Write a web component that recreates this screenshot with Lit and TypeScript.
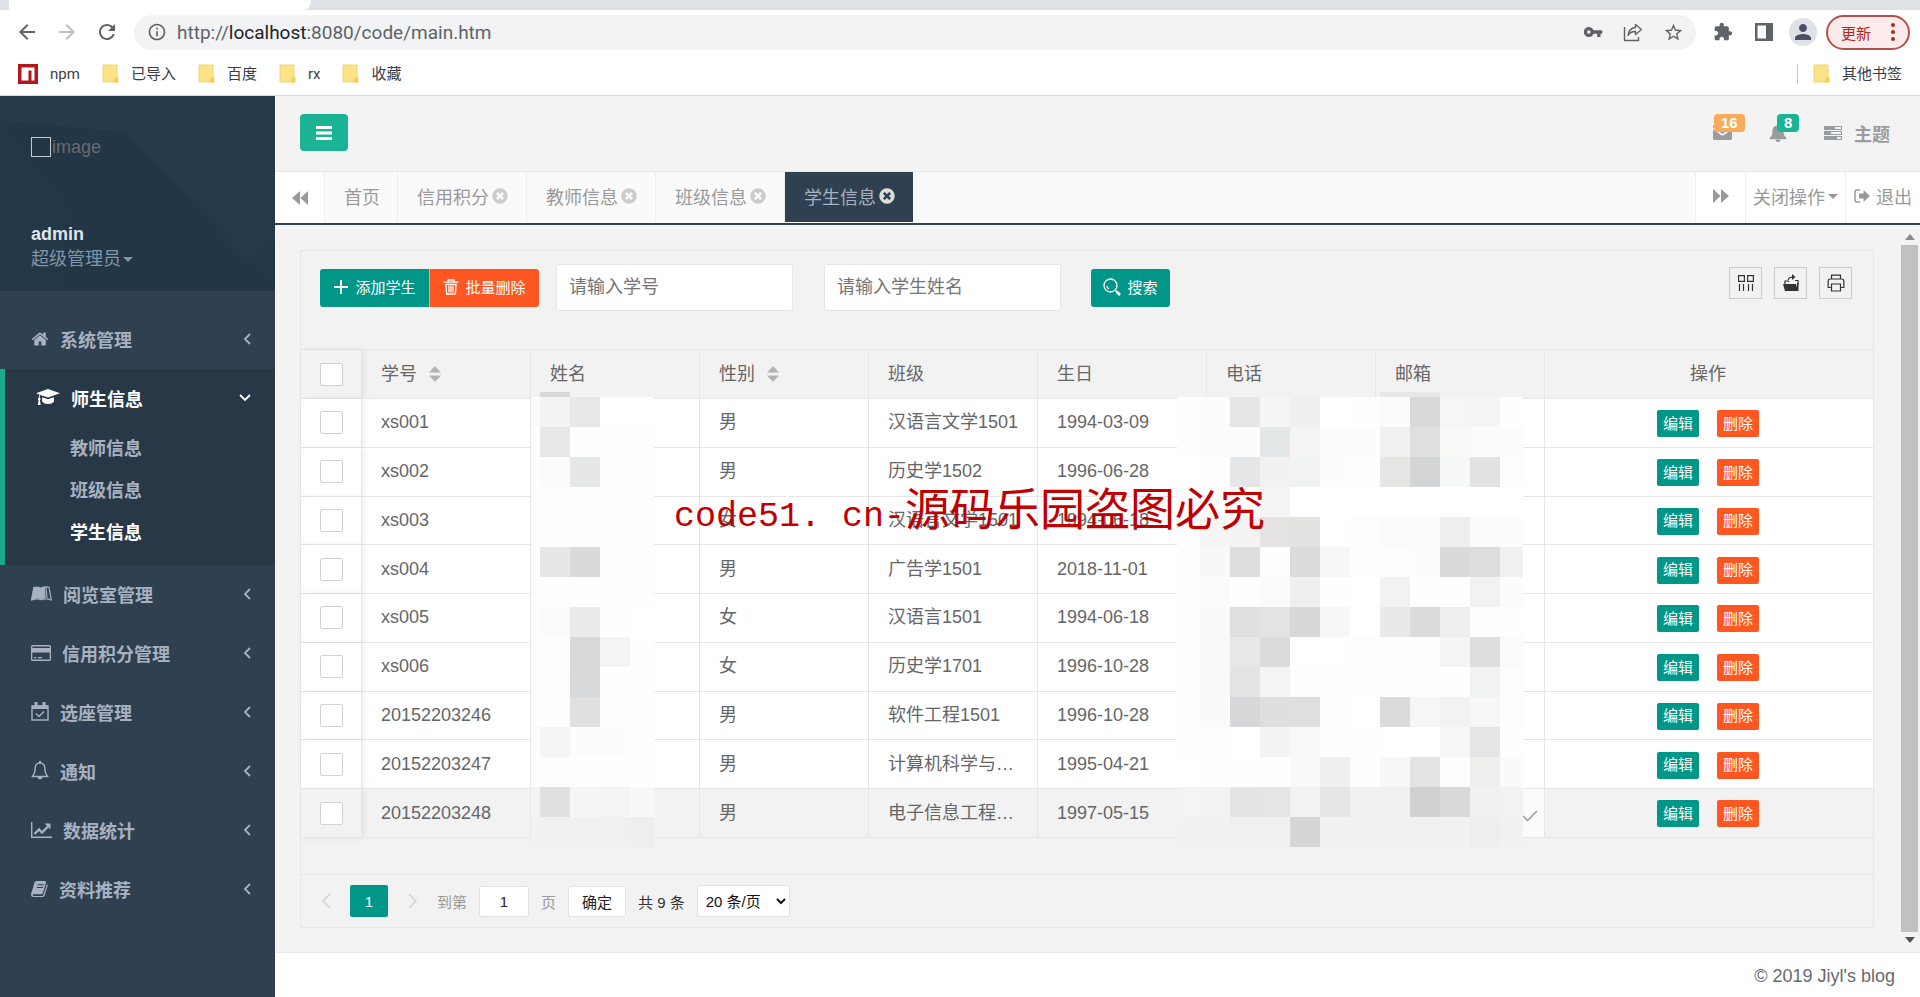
import { LitElement, html, svg, css, TemplateResult } from "lit";
import { customElement } from "lit/decorators.js";

const box = (w: number, h: number, vb: string, body: TemplateResult) =>
  html`<svg class="icon" width=${w} height=${h} viewBox=${vb} aria-hidden="true">${body}</svg>`;

const material = (size: number, d: string) =>
  box(size, size, "0 0 24 24", svg`<path fill="currentColor" d=${d}/>`);

const backArrow = () => material(24, "M20 11H7.83l5.59-5.59L12 4l-8 8 8 8 1.41-1.41L7.83 13H20v-2z");
const forwardArrow = () => material(24, "M4 11h12.17l-5.59-5.59L12 4l8 8-8 8-1.41-1.41L16.17 13H4v-2z");
const reload = () => material(24, "M17.65 6.35C16.2 4.9 14.21 4 12 4c-4.42 0-7.99 3.58-7.99 8s3.57 8 7.99 8c3.73 0 6.84-2.55 7.73-6h-2.08c-.82 2.33-3.04 4-5.65 4-3.31 0-6-2.69-6-6s2.69-6 6-6c1.66 0 3.14.69 4.22 1.78L13 11h7V4l-2.35 2.35z");
const info = () => material(20, "M11 17h2v-6h-2v6zm1-15C6.48 2 2 6.48 2 12s4.48 10 10 10 10-4.48 10-10S17.52 2 12 2zm0 18c-4.41 0-8-3.59-8-8s3.59-8 8-8 8 3.59 8 8-3.59 8-8 8zM11 9h2V7h-2v2z");
const key = () => material(20, "M12.65 10C11.83 7.67 9.61 6 7 6c-3.31 0-6 2.69-6 6s2.69 6 6 6c2.61 0 4.83-1.67 5.65-4H17v4h4v-4h2v-4H12.65zM7 14c-1.1 0-2-.9-2-2s.9-2 2-2 2 .9 2 2-.9 2-2 2z");
const share = () => box(20, 20, "0 0 20 20", svg`<g fill="none" stroke="currentColor" stroke-width="1.4" stroke-linejoin="round"><path d="M1.5 5v13.500H15.500V15"/><path d="M12.500 2.500l6 5-6 5V9.500C8.500 9.300 6.500 11 5 13.500 5.500 9 8 6 12.500 5.500z"/></g>`);
const star = () => material(21, "M22 9.24l-7.19-.62L12 2 9.190 8.630 2 9.240l5.460 4.730L5.820 21 12 17.270 18.180 21l-1.630-7.030L22 9.240zM12 15.400l-3.760 2.270 1-4.280-3.320-2.880 4.380-.38L12 6.100l1.710 4.040 4.380.38-3.320 2.880 1 4.280L12 15.400z");
const puzzle = () => material(20, "M20.5 11H19V7c0-1.1-.9-2-2-2h-4V3.500C13 2.120 11.880 1 10.500 1S8 2.120 8 3.500V5H4c-1.100 0-1.990.9-1.990 2v3.800H3.500c1.490 0 2.700 1.210 2.700 2.700s-1.210 2.700-2.700 2.700H2V20c0 1.100.9 2 2 2h3.800v-1.500c0-1.490 1.210-2.700 2.700-2.700 1.490 0 2.700 1.210 2.700 2.700V22H17c1.100 0 2-.9 2-2v-4h1.500c1.380 0 2.500-1.120 2.500-2.500S21.880 11 20.500 11z");
const sidePanel = () => box(18, 18, "0 0 18 18", svg`<path fill="currentColor" fill-rule="evenodd" d="M0 0h18v18H0zM2.500 2.500v13h8.500v-13z"/>`);
const person = () => material(24, "M12 12c2.210 0 4-1.790 4-4s-1.790-4-4-4-4 1.790-4 4 1.790 4 4 4zm0 2c-2.670 0-8 1.340-8 4v2h16v-2c0-2.660-5.330-4-8-4z");
const dots = () => box(4, 18, "0 0 4 18", svg`<g fill="currentColor"><circle cx="2" cy="2" r="2"/><circle cx="2" cy="9" r="2"/><circle cx="2" cy="16" r="2"/></g>`);
const npmLogo = () => box(20, 20, "0 0 20 20", svg`<path fill="#b3161b" d="M0 0h20v20H0z"/><path fill="#fff" d="M3.500 3.500h13v13h-3v-10h-3v10h-7z"/>`);
const folder = () => box(17, 20, "0 0 17 20", svg`<path fill="#fbe38a" stroke="#f0d470" d="M1 1h14v11l1 1v5H1z"/><path fill="#f3cf5a" d="M12 14.500q2-2 4-.5v4.500h-4z"/>`);

const bars = () => box(18, 14, "0 0 18 14", svg`<path fill="currentColor" d="M1 0h16v3H1zM1 5.500h16v3H1zM1 11h16v3H1z"/>`);
const envelope = () => box(19, 15, "0 0 19 15", svg`<path fill="currentColor" d="M0 4.500l8 5.500q1.500 1 3 0l8-5.500V13.500q0 1.500-1.500 1.500h-16Q0 15 0 13.500zM1 0h17q1 0 1 1.500 0 1-1 1.700l-7.500 5q-1 .7-2 0L1 3.200Q0 2.500 0 1.500 0 0 1 0z"/>`);
const bellSolid = () => box(18, 18, "0 0 18 18", svg`<path fill="currentColor" d="M9 0q1.300 0 1.300 1.500C13 2 14.500 4 14.500 6.500c0 4 1 6 3 7.500q0 1.200-1.300 1.200H1.800Q.5 15.200.5 14c2-1.500 3-3.500 3-7.500C3.500 4 5 2 7.700 1.500 7.700 0 9 0 9 0zM6.500 15.800h5a2.500 2.200 0 0 1-5 0z"/>`);
const tasks = () => box(18, 14, "0 0 18 14", svg`<path fill="currentColor" fill-rule="evenodd" d="M0 0h18v4H0zM11 1v2h6V1zM0 5h18v4H0zM7 6v2h10V6zM0 10h18v4H0zM13 11v2h4v-2z"/>`);
const rewind = () => box(16, 16, "0 0 16 16", svg`<path fill="currentColor" d="M8 1v14L0 8zM16 1v14L8.500 8z"/>`);
const fastForward = () => box(16, 16, "0 0 16 16", svg`<path fill="currentColor" d="M8 1v14l8-7zM0 1v14l7.500-7z"/>`);
const closeDot = () => box(18, 18, "0 0 1792 1792", svg`<path fill="currentColor" d="M1277 1122q0-26-19-45l-181-181 181-181q19-19 19-45 0-27-19-46l-90-90q-19-19-46-19-26 0-45 19l-181 181-181-181q-19-19-45-19-27 0-46 19l-90 90q-19 19-19 46 0 26 19 45l181 181-181 181q-19 19-19 45 0 27 19 46l90 90q19 19 46 19 26 0 45-19l181-181 181 181q19 19 45 19 27 0 46-19l90-90q19-19 19-46zm387-226q0 209-103 385.500t-279.500 279.500-385.500 103-385.500-103-279.500-279.500-103-385.500 103-385.500 279.500-279.500 385.500-103 385.500 103 279.500 279.500 103 385.500z"/>`);
const signOut = () => box(16, 14, "0 0 16 14", svg`<path fill="none" stroke="currentColor" stroke-width="1.500" d="M6 1H3Q1 1 1 3v8q0 2 2 2h3"/><path fill="currentColor" d="M5 4.500h4.500V1L16 7l-6.500 6V9.500H5z"/>`);
const caret = () => box(10, 5, "0 0 10 5", svg`<path fill="currentColor" d="M0 0h10L5 5z"/>`);

const home = () => box(18, 18, "0 0 1792 1792", svg`<path fill="currentColor" d="M1472 992v480q0 26-19 45t-45 19h-384v-384h-256v384h-384q-26 0-45-19t-19-45v-480q0-1 .5-3t.5-3l575-474 575 474q1 2 1 6zm223-69l-62 74q-8 9-21 11h-3q-13 0-21-7l-692-577-692 577q-12 8-24 7-13-2-21-11l-62-74q-8-10-7-23.500t11-21.500l719-599q32-26 76-26t76 26l244 204v-195q0-14 9-23t23-9h192q14 0 23 9t9 23v408l219 182q10 8 11 21.500t-7 23.500z"/>`);
const cap = () => box(24, 17, "0 0 24 17", svg`<path fill="currentColor" d="M12 0l12 4.200L12 8.500 4.500 5.900Q3.600 6.500 3.500 8.300q1 .6 1 1.600 0 .8-.6 1.300l.8 4.800H1.800l.8-4.800Q2 10.700 2 9.900q0-1 .8-1.500.1-1.800.7-2.900L0 4.200zM6.200 8.200L12 10.300l5.800-2.100.3 4.300Q16 15 12 15t-6-2.500z"/>`);
const leanpub = () => box(21, 15, "0 0 21 15", svg`<path fill="currentColor" d="M2.500 1Q7 0 9.500 1.500h1V13Q6 11.500 0 14z"/><path fill="none" stroke="currentColor" stroke-width="1.200" d="M10.500 2Q14 .3 18 1.200L20.300 14Q15 12 10.500 13.700 6 12 .7 14L3 1.200M15 1.500L16 12"/><path fill="currentColor" d="M10 1.500q2-.8 4-.7l.6 11.500q-2 0-4.600.7z"/>`);
const card = () => box(20, 16, "0 0 20 16", svg`<path fill="currentColor" fill-rule="evenodd" d="M1.500 0h17Q20 0 20 1.500v13q0 1.500-1.500 1.500h-17Q0 16 0 14.500v-13Q0 0 1.500 0zM1.300 1.500v1.500h17.400V1.500zM1.300 7.500v7h17.400v-7zM3 12h2.500v1.300H3zM7 12h4v1.300H7z"/>`);
const calendar = () => box(18, 19, "0 0 18 19", svg`<path fill="none" stroke="currentColor" stroke-width="1.400" d="M1 4h16v14H1zM5 11.500l3 3 5-5"/><path fill="currentColor" d="M1 3.500h16V7H1zM3.500 0h3v5h-3zM11.500 0h3v5h-3z"/>`);
const bell = () => box(18, 19, "0 0 18 19", svg`<path fill="none" stroke="currentColor" stroke-width="1.400" stroke-linejoin="round" d="M9 2C5.800 2 4.200 4.500 4.200 7c0 4-1 6.500-3 8.500h15.600c-2-2-3-4.500-3-8.500C13.800 4.500 12.200 2 9 2z"/><path fill="currentColor" d="M8 0h2v2H8zM6.500 16h5a2.500 2.500 0 0 1-5 0z"/>`);
const chart = () => box(21, 16, "0 0 21 16", svg`<path fill="none" stroke="currentColor" stroke-width="1.400" d="M.7 0v15.300H21"/><path fill="none" stroke="currentColor" stroke-width="2.400" d="M3.500 12L8 7.500l3 3L17 4.500"/><path fill="currentColor" d="M13.500 1.500H19.500V7.500z"/>`);
const book = () => box(17, 16, "0 0 17 16", svg`<path fill="currentColor" fill-rule="evenodd" d="M5.500 0H14q1.500 0 1 1.500L12 12q-.5 1.300-2 1.300H2.500q-.8 0-.7.8.2.900 1 .9H11q1 0 1.500-1.200L16 3q1 .6.7 1.600l-3 10Q13.200 16 11.800 16H2.500Q0 16 0 13.500q0-1 .5-2l3-10Q4 0 5.500 0zM6.700 3.200L6.400 4.300h6.200l.3-1.100zM5.900 5.900L5.600 7h6.200l.3-1.100z"/>`);
const chevLeft = () => box(8, 12, "0 0 8 12", svg`<path fill="none" stroke="currentColor" stroke-width="1.800" d="M7 1L2 6l5 5"/>`);
const chevDown = () => box(12, 8, "0 0 12 8", svg`<path fill="none" stroke="currentColor" stroke-width="1.800" d="M1 1l5 5 5-5"/>`);
const pageChev = (d: string) => box(12, 18, "0 0 12 18", svg`<path fill="none" stroke="currentColor" stroke-width="1.500" d=${d}/>`);

const plus = () => box(16, 16, "0 0 16 16", svg`<path fill="none" stroke="currentColor" stroke-width="2" d="M8 1v14M1 8h14"/>`);
const trash = () => box(16, 16, "0 0 16 16", svg`<g fill="none" stroke="currentColor" stroke-width="1.300"><path d="M.5 3.200h15M5 3V1h6v2M2.200 5.300h11.600M3 5.500L3.600 15h8.800L13 5.500M6 6.500v7M8 6.500v7M10 6.500v7"/></g>`);
const magnifier = () => box(18, 18, "0 0 18 18", svg`<g fill="none" stroke="currentColor" stroke-width="1.300"><circle cx="7.500" cy="7.500" r="6.500"/><path d="M4 8q0 2 2 3M12.500 12.500l4 4" /><path stroke-width="2.600" d="M13.500 13.500l3.500 3.500"/></g>`);
const columnsIcon = () => box(18, 18, "0 0 18 18", svg`<g fill="none" stroke="currentColor" stroke-width="1.200"><path d="M1.600 1.600h5.800v5.800H1.600zM10.600 1.600h5.800v5.800h-5.800z"/><path d="M2.500 10v7M6.500 10v7M11.500 10v7M15.500 10v7"/></g>`);
const exportIcon = () => box(18, 18, "0 0 18 18", svg`<path fill="currentColor" d="M1 10h13l2 7H3zM15 9h1.500v8H15z"/><path fill="none" stroke="currentColor" stroke-width="1.200" d="M3 10V7h3l1 1M16 11V6.500h-3M6 6q1-3 5-3"/><path fill="currentColor" d="M10 0l3.500 3L10 6z"/>`);
const printer = () => box(18, 18, "0 0 18 18", svg`<g fill="none" stroke="currentColor" stroke-width="1.200"><path d="M4.500 5V1.200h9V5M4.500 13.500H1.200V7Q1.200 5 3.200 5h11.600Q16.800 5 16.800 7v6.500h-3.300"/><path d="M4.500 10h9v7h-9z"/></g>`);
const sorter = () => box(12, 18, "0 0 12 18", svg`<path fill="#b2b2b2" d="M0 7.500L6 1l6 6.500zM0 10.500L6 17l6-6.500z"/>`);
const tick = () => box(16, 12, "0 0 16 12", svg`<path fill="none" stroke="#999" stroke-width="1.500" d="M1 6l4.500 4.500L15 1"/>`);

const MENU_TOP = [{ icon: home, label: "系统管理" }];
const MENU_REST = [
  { icon: leanpub, label: "阅览室管理" },
  { icon: card, label: "信用积分管理" },
  { icon: calendar, label: "选座管理" },
  { icon: bell, label: "通知" },
  { icon: chart, label: "数据统计" },
  { icon: book, label: "资料推荐" },
];

const STUDENTS = [
  ["xs001", "男", "汉语言文学1501", "1994-03-09"],
  ["xs002", "男", "历史学1502", "1996-06-28"],
  ["xs003", "女", "汉语言文学1501", "1994-06-18"],
  ["xs004", "男", "广告学1501", "2018-11-01"],
  ["xs005", "女", "汉语言1501", "1994-06-18"],
  ["xs006", "女", "历史学1701", "1996-10-28"],
  ["20152203246", "男", "软件工程1501", "1996-10-28"],
  ["20152203247", "男", "计算机科学与技术1501", "1995-04-21"],
  ["20152203248", "男", "电子信息工程技术1501", "1997-05-15"],
];

// Shades of the pixelated privacy blocks, one row per 30px band.
const NAME_SHADES = [
  "fafafa f3f3f1 e8e8e7 ffffff ffffff", "fefefe e8e8e8 fdfdfd fdfdfd fdfdfd", "fefefe fbfbfb e6e8e8 fefefe fefefe",
  "fefefe fefefe fefefe fefefe fefefe", "fdfdfd fefefe fefefe fefefe fefefe", "fefefe e7e7e6 dadada fdfdfd fdfdfd",
  "fefefe fdfdfd fdfdfd fdfdfd fdfdfd", "fdfdfd fbfbfa ebebeb fefefe ffffff", "fdfdfd fdfdfd d8d9db f3f5f5 fefefe",
  "fdfdfd fdfdfd d9dadb fefefe fefefe", "fefefe fefefe e0e0e1 fefefe fefefe", "fdfdfd f5f5f5 fcfcfc fcfcfc fdfdfd",
  "fefefe fdfdfd fefefe fefefe fefefe", "f4f4f4 e0e0df f5f5f5 f4f4f4 f8f8f8", "f1f1f1 f0f0f0 f0f0f0 f0f0f0 eeeeee",
];
const CONTACT_SHADES = [
  "fefefe fcfcfc e6e6e4 f5f5f5 eef0f0 ffffff fefefe fbfbfb d9d9d9 f6f6f6 f5f5f5 fefefe",
  "fdfdfd fcfcfc fcfcfc e4e7e7 f5f5f5 fcfcfc fcfcfc f0f0f0 dfdfde f9f9f8 fbfbfb fbfbfb",
  "ffffff fefefe e5e6e7 f1f1f1 f1f2f2 fcfcfc fdfdfd e6e6e5 d4d5d7 f7f8f8 e2e2e2 fdfdfd",
  "fefefe fefefe fefefe f5f5f5 ffffff ffffff ffffff ffffff ffffff ffffff ffffff ffffff",
  "fefefe f5f5f4 f3f3f3 e6e4e3 e2e2e1 ffffff fdfdfd fbfbfb fcfcfc eeeeee fbfbfb fcfcfc",
  "fefefe f8f8f8 dededc fefefe dadcdc f7f7f7 fdfdfd fdfdfd fcfcfc d9dbdb dddddd f0f0f0",
  "fdfdfd fbfbfb fefefe fbfbfb efefef fefefe ffffff f2f2f2 fefefe fefefe f2f2f2 fcfcfc",
  "fdfdfd fafafa dfdfde e4e3e2 d8d8d8 f7f7f7 ffffff e9e9e8 dcdcdd efeeec fefefe fefefe",
  "fefefe f9f9f9 e8e8e8 dcdcda ffffff ffffff fdfdfd fdfdfd fdfdfd f4f4f4 dedede fbfbfb",
  "fefefe f9f9f9 e3e3e4 f4f4f4 fefefe fdfdfd fdfdfd fefefe fefefe fefefe f1f3f3 fdfdfd",
  "fefefe fafafa d7d7d9 dedede dfdfe0 fefefe ffffff dcdcdc f6f6f6 f2f2f2 f6f7f6 fdfdfd",
  "fefefe fdfdfd ffffff f3f3f3 f9f9f9 fefefe fefefe ffffff ffffff f7f7f7 e5e5e5 fefefe",
  "ffffff fefefe fefefe fefefe f9f9f9 efefef fefefe f8f8f8 e3e3e3 fdfdfd eeeeec fafafa",
  "f4f4f4 f2f2f2 e4e4e4 e5e5e5 f2f2f2 e5e6e6 f0f0f0 f0f0f0 d0d1d1 d9d9d9 f1f1f1 f2f2f2",
  "f1f1f1 f1f1f1 f0f0f0 f0f0f0 d6d6d6 f1f1f1 f1f1f1 f1f1f1 f1f1f1 f1f1f1 edeeee f1f1f1",
];

const mosaic = (rows: string[], first: number, last: number, cls: string, accent: number[]) => {
  const n = rows[0].split(" ").length;
  const width = first + 30 * (n - 2) + last;
  return html`<svg class="mosaic ${cls}" width=${width} height="455" viewBox="0 0 ${width} 455" shape-rendering="crispEdges" aria-hidden="true">
    <rect x=${accent[0]} y="0" width=${accent[1]} height="5" fill=${"#d8d8d8"} opacity=${accent[2]}></rect>
    ${rows.map((row, r) => row.split(" ").map((c, i) => svg`<rect x=${i ? first + 30 * (i - 1) : 0} y=${5 + r * 30} width=${i === 0 ? first : i === n - 1 ? last : 30} height="30" fill=${"#" + c}/>`))}
  </svg>`;
};

const FONT = css`"Liberation Sans", "Noto Sans CJK SC", sans-serif`;

@customElement("browser-bar")
class BrowserBar extends LitElement {
  static styles = css`
    :host { display: block; background: #fff; color: #5f6368; font-family: Roboto, "Noto Sans CJK SC", sans-serif; border-bottom: 1px solid #d9dcd8; }
    .icon { display: block; flex: none; }
    button { border: 0; background: none; padding: 0; color: inherit; font: inherit; display: flex; align-items: center; justify-content: center; }
    .strip { display: flex; height: 10px; background: #dee1e6; }
    .strip-tab { background: #fff; width: 302px; margin-left: 9px; border-radius: 0 0 8px 0; }
    .tools { display: flex; align-items: center; height: 44px; padding: 0 10px 0 14px; }
    .nav { display: flex; gap: 15px; margin-right: 15px; }
    .nav button { width: 25px; }
    .dim { color: #bdc1c6; }
    .address { flex: 1; display: flex; align-items: center; height: 35px; border-radius: 18px; background: #f1f3f4; padding: 0 12px 0 13px; }
    .url { flex: 1; margin-left: 10px; font-size: 19px; }
    .host { color: #202124; }
    .address-actions { display: flex; gap: 20px; }
    .right { display: flex; align-items: center; margin-left: 17px; gap: 22px; }
    .avatar { width: 28px; height: 28px; border-radius: 50%; background: #dee1e6; color: #4a5068; margin: 0 -13px 0 -6px; }
    .update { width: 84px; height: 35px; border: 2px solid #b5504f; border-radius: 18px; background: #fcebea; color: #b3261e; font-size: 15px; gap: 20px; box-sizing: border-box; }
    .marks { display: flex; align-items: center; height: 41px; padding: 0 18px 2px; box-sizing: border-box; font-size: 15px; line-height: 20px; color: #3c4043; }
    .mark { display: flex; align-items: center; gap: 12px; color: inherit; text-decoration: none; margin-right: 22px; }
    .other { margin: 0 0 0 auto; padding-left: 15px; border-left: 1px solid #c4c7cb; height: 20px; }
  `;
  render() {
    return html`
      <div class="strip"><div class="strip-tab"></div></div>
      <div class="tools">
        <div class="nav">
          <button aria-label="后退">${backArrow()}</button>
          <button class="dim" aria-label="前进">${forwardArrow()}</button>
          <button aria-label="刷新">${reload()}</button>
        </div>
        <div class="address">
          ${info()}
          <div class="url">http://<span class="host">localhost</span>:8080/code/main.htm</div>
          <div class="address-actions">
            <button aria-label="密码">${key()}</button>
            <button aria-label="分享">${share()}</button>
            <button aria-label="收藏此页">${star()}</button>
          </div>
        </div>
        <div class="right">
          <button aria-label="扩展程序">${puzzle()}</button>
          <button aria-label="侧边栏">${sidePanel()}</button>
          <button class="avatar" aria-label="用户">${person()}</button>
          <button class="update"><span>更新</span>${dots()}</button>
        </div>
      </div>
      <nav class="marks">
        <a class="mark" href="#">${npmLogo()}npm</a>
        ${["已导入", "百度", "rx", "收藏"].map((m) => html`<a class="mark" href="#">${folder()}${m}</a>`)}
        <a class="mark other" href="#">${folder()}其他书签</a>
      </nav>`;
  }
}

@customElement("side-menu")
class SideMenu extends LitElement {
  static styles = css`
    :host { display: block; background: #2f4050; color: #a7b1c2; font: 18px ${FONT}; }
    .icon { display: block; flex: none; }
    a { color: inherit; text-decoration: none; }
    .profile { position: relative; box-sizing: border-box; height: 195px; padding: 41px 31px 0; background: #243747; overflow: hidden; }
    .pattern { position: absolute; inset: 0; width: 100%; height: 100%; }
    .photo { position: relative; display: flex; align-items: center; gap: 1px; color: #676a6c; line-height: 20px; }
    .missing { width: 18px; height: 18px; border: 1px solid #c3c9ce; }
    .name { position: relative; display: block; margin-top: 65px; line-height: 25px; color: #dfe4ed; font-weight: bold; }
    .role { position: relative; display: flex; align-items: center; gap: 2px; line-height: 24px; color: #8095a8; }
    ul { list-style: none; margin: 0; padding: 0; }
    .menu { padding-top: 19px; font-weight: bold; }
    .item { display: flex; align-items: center; height: 59px; box-sizing: border-box; padding: 0 24px 2px 31px; gap: 11px; }
    .arrow { margin-left: auto; }
    .open { background: #293846; border-left: 5px solid #19aa8d; padding-bottom: 11px; }
    .open .item { color: #fff; }
    .sub { display: block; line-height: 42px; padding-left: 65px; }
    .current { color: #fff; }
  `;
  private item(icon: () => TemplateResult, label: string) {
    return html`<li><a class="item" href="#">${icon()}<span>${label}</span><span class="arrow">${chevLeft()}</span></a></li>`;
  }
  render() {
    return html`
      <div class="profile">
        <svg class="pattern" viewBox="0 0 275 195" preserveAspectRatio="none" aria-hidden="true">
          <path fill="#263a49" d="M0 0h155L125 36 0 25z"/>
          <path fill="#253949" d="M155 0h120v145l-28 20L125 36z"/>
          <path fill="#233646" d="M0 25l125 11 122 129 28 20v10H0z"/>
          <path fill="#243747" d="M0 25l70 90-10 80H0z"/>
        </svg>
        <div class="photo"><span class="missing"></span>image</div>
        <strong class="name">admin</strong>
        <a class="role" href="#">超级管理员 ${caret()}</a>
      </div>
      <ul class="menu">
        ${MENU_TOP.map((m) => this.item(m.icon, m.label))}
        <li class="open">
          <a class="item" href="#">${cap()}<span>师生信息</span><span class="arrow">${chevDown()}</span></a>
          <ul>
            <li><a class="sub" href="#">教师信息</a></li>
            <li><a class="sub" href="#">班级信息</a></li>
            <li><a class="sub current" href="#">学生信息</a></li>
          </ul>
        </li>
        ${MENU_REST.map((m) => this.item(m.icon, m.label))}
      </ul>`;
  }
}

@customElement("top-bar")
class TopBar extends LitElement {
  static styles = css`
    :host { display: block; font: 18px ${FONT}; color: #999; }
    .icon { display: block; flex: none; }
    button { border: 0; background: none; padding: 0; color: inherit; font: inherit; display: flex; align-items: center; justify-content: center; }
    .bar { display: flex; align-items: flex-start; height: 75px; box-sizing: border-box; padding: 18px 30px 0 25px; background: #f3f3f3; }
    .toggle { width: 48px; height: 37px; border-radius: 4px; background: #1ab394; color: #fff; }
    .links { display: flex; align-items: center; margin-left: auto; height: 37px; color: #999c9e; font-weight: bold; }
    .notice { position: relative; margin-right: 37px; }
    .badge { position: absolute; left: 1px; top: -11px; padding: 0 7px; border-radius: 4px; background: #f8ac59; color: #fff; font: bold 15px/18px ${FONT}; }
    .green { left: 8px; top: -10px; background: #1ab394; }
    .theme { gap: 12px; font-weight: bold; }
    .tabs { display: flex; height: 51px; border-top: 1px solid #e7eaec; border-bottom: 2px solid #2f4050; background: #fafafa; }
    .side { background: #fff; width: 50px; border-right: 1px solid #eee; }
    .tab { display: flex; align-items: center; gap: 2px; padding: 0 17px 3px 19px; border-right: 1px solid #eee; text-decoration: none; color: inherit; }
    .tab .icon { color: #ccc; }
    .on { background: #2f4050; color: #a7b1c2; height: 47px; border-right: 0; }
    .on .icon { color: #dcdcd8; }
    .end { display: flex; margin-left: auto; background: #fff; border-left: 1px solid #eee; }
    .end button { padding-bottom: 3px; }
    .ops { width: 100px; gap: 3px; border-right: 1px solid #eee; }
    .exit { width: 74px; gap: 6px; }
  `;
  render() {
    return html`
      <div class="bar">
        <button class="toggle" aria-label="菜单">${bars()}</button>
        <div class="links">
          <button class="notice" aria-label="消息">${envelope()}<span class="badge">16</span></button>
          <button class="notice" aria-label="提醒">${bellSolid()}<span class="badge green">8</span></button>
          <button class="theme">${tasks()}主题</button>
        </div>
      </div>
      <nav class="tabs">
        <button class="side" aria-label="向左">${rewind()}</button>
        <a class="tab" href="#">首页</a>
        ${["信用积分", "教师信息", "班级信息"].map((t) => html`<a class="tab" href="#">${t}${closeDot()}</a>`)}
        <a class="tab on" href="#">学生信息${closeDot()}</a>
        <div class="end">
          <button class="side" aria-label="向右">${fastForward()}</button>
          <button class="ops">关闭操作${caret()}</button>
          <button class="exit">${signOut()}退出</button>
        </div>
      </nav>`;
  }
}

@customElement("student-table")
class StudentTable extends LitElement {
  static styles = css`
    :host { display: block; border: 1px solid #e6e6e6; background: #f2f2f2; color: #666; font: 18px ${FONT}; }
    .icon { display: block; flex: none; }
    button, input, select { font: inherit; margin: 0; box-sizing: border-box; }
    button { border: 0; padding: 0; display: inline-flex; align-items: center; justify-content: center; }
    .tools { display: flex; align-items: center; padding: 13px 21px 38px 19px; }
    .btn { height: 38px; gap: 6px; padding-bottom: 2px; color: #fff; background: #009688; font-size: 15px; border-radius: 3px; }
    .add { width: 110px; border-radius: 3px 0 0 3px; border-right: 1px solid #fff8; }
    .drop { width: 109px; border-radius: 0 3px 3px 0; background: #ff5722; }
    .search { width: 79px; margin-left: 30px; }
    .field { width: 237px; height: 47px; border: 1px solid #e6e6e6; border-radius: 2px; padding: 0 12px; background: #fff; outline: 0; }
    .field::placeholder { color: #757575; opacity: 1; }
    .first { margin: 0 31px 0 17px; }
    .actions { display: flex; gap: 12px; margin: 3px 0 auto auto; }
    .act { width: 33px; height: 32px; border: 1px solid #ccc; background: none; color: #333; }
    .grid { position: relative; border-top: 1px solid #e6e6e6; border-bottom: 1px solid #e6e6e6; padding-bottom: 36px; }
    table { width: 100%; height: 488px; table-layout: fixed; border-collapse: separate; border-spacing: 0; }
    .pick { width: 61px; }
    .data { width: 169px; }
    th { height: 49px; }
    th, td { box-sizing: border-box; padding: 0 18px 1px 19px; border: solid #e6e6e6; border-width: 0 1px 1px 0; font-weight: normal; text-align: left; white-space: nowrap; overflow: hidden; text-overflow: ellipsis; line-height: 28px; }
    th:last-child, td:last-child { border-right: 0; text-align: center; padding: 0 21px 0 19px; }
    th:first-child, td:first-child { box-shadow: 2px 0 6px #00000014; overflow: visible; padding-bottom: 0; }
    tbody tr { background: #fff; }
    tbody tr:last-child { background: #f2f2f2; }
    .tick { appearance: none; display: block; width: 23px; height: 23px; border: 1px solid #d2d2d2; border-radius: 2px; background: #fff; }
    .sortable { display: inline-flex; align-items: center; gap: 12px; }
    .row-act { width: 42px; height: 27px; font-size: 15px; color: #fff; background: #009688; border-radius: 2px; vertical-align: middle; }
    .red { background: #ff5722; margin-left: 18px; }
    .mail { position: relative; }
    .expand { position: absolute; right: 0; top: 0; bottom: 0; width: 26px; padding: 5px 2px 0 0; background: #fbfbfb; }
    .mosaic { position: absolute; top: 42px; display: block; }
    .names { left: 230px; }
    .contacts { left: 876px; }
    .stamp { position: absolute; left: 373px; top: 131px; color: #c00000; line-height: 52px; font-size: 45px; white-space: pre; font-family: "Noto Sans CJK SC", sans-serif; }
    .latin { font-family: "Liberation Mono", monospace; font-size: 35px; }
    .pager { display: flex; align-items: center; height: 52px; padding-left: 19px; font-size: 15px; color: #999; }
    .turn { background: none; color: #d2d2d2; width: 12px; }
    .page { width: 38px; height: 32px; margin: 0 19px 0 18px; background: #009688; color: #fff; border-radius: 2px; }
    .goto { display: flex; align-items: center; margin-left: 18px; gap: 12px; }
    .number { width: 50px; height: 31px; border: 1px solid #e2e2e2; border-radius: 2px; text-align: center; color: #222; background: #fff; padding: 0; }
    .ok { width: 58px; height: 31px; margin-left: 12px; border: 1px solid #e2e2e2; border-radius: 2px; background: #fff; color: #222; }
    .total { margin: 0 12px; color: #333; }
    .size { width: 93px; height: 32px; padding: 0 4px; border: 1px solid #e2e2e2; border-radius: 2px; background: #fff; color: #111; }
  `;
  render() {
    return html`
      <div class="tools">
        <button class="btn add">${plus()}添加学生</button>
        <button class="btn drop">${trash()}批量删除</button>
        <input class="field first" aria-label="学号" placeholder="请输入学号">
        <input class="field" aria-label="学生姓名" placeholder="请输入学生姓名">
        <button class="btn search">${magnifier()}搜索</button>
        <div class="actions">
          <button class="act" aria-label="筛选列">${columnsIcon()}</button>
          <button class="act" aria-label="导出">${exportIcon()}</button>
          <button class="act" aria-label="打印">${printer()}</button>
        </div>
      </div>
      <div class="grid">
        <table>
          <colgroup><col class="pick">${Array.from({ length: 7 }, () => html`<col class="data">`)}<col></colgroup>
          <thead><tr>
            <th><input class="tick" type="checkbox" aria-label="全选"></th>
            <th><span class="sortable">学号${sorter()}</span></th>
            <th>姓名</th>
            <th><span class="sortable">性别${sorter()}</span></th>
            <th>班级</th><th>生日</th><th>电话</th><th>邮箱</th><th>操作</th>
          </tr></thead>
          <tbody>
            ${STUDENTS.map(([id, sex, cls, born], i) => html`<tr>
              <td><input class="tick" type="checkbox" aria-label=${"选择 " + id}></td>
              <td>${id}</td><td></td><td>${sex}</td><td>${cls}</td><td>${born}</td><td></td>
              <td class="mail">${i === STUDENTS.length - 1 ? html`<button class="expand" aria-label="展开">${tick()}</button>` : ""}</td>
              <td><button class="row-act">编辑</button><button class="row-act red">删除</button></td>
            </tr>`)}
          </tbody>
        </table>
        ${mosaic(NAME_SHADES, 9, 24, "names", [9, 30, 1])}
        ${mosaic(CONTACT_SHADES, 23, 23, "contacts", [203, 60, 0.4])}
        <div class="stamp"><span class="latin">code51. cn-</span>源码乐园盗图必究</div>
      </div>
      <div class="pager">
        <button class="turn" aria-label="上一页">${pageChev("M10 2L3 9l7 7")}</button>
        <button class="page">1</button>
        <button class="turn" aria-label="下一页">${pageChev("M2 2l7 7-7 7")}</button>
        <label class="goto">到第<input class="number" value="1">页</label>
        <button class="ok">确定</button>
        <span class="total">共 9 条</span>
        <select class="size" aria-label="每页条数"><option>20 条/页</option></select>
      </div>`;
  }
}

@customElement("app-root")
class AppRoot extends LitElement {
  static styles = css`
    :host { display: flex; flex-direction: column; min-height: 100vh; background: #f3f3f3; }
    .body { flex: 1; display: flex; }
    side-menu { flex: none; width: 275px; }
    .main { flex: 1; min-width: 0; display: flex; flex-direction: column; }
    .view { flex: 1; display: flex; }
    .pane { flex: 1; min-width: 0; padding: 25px 27px 24px 25px; }
    .track { display: flex; flex-direction: column; align-items: center; width: 17px; margin-right: 2px; padding: 9px 0; gap: 5px; }
    .thumb { flex: 1; width: 17px; background: #c1c1c1; }
    .cue { display: block; }
    footer { box-sizing: border-box; height: 45px; padding: 0 25px; border-top: 1px solid #e7eaec; background: #fff; color: #676a6c; text-align: right; font: 18px/46px ${FONT}; }
  `;
  render() {
    return html`
      <browser-bar></browser-bar>
      <div class="body">
        <side-menu></side-menu>
        <div class="main">
          <top-bar></top-bar>
          <div class="view">
            <div class="pane"><student-table></student-table></div>
            <div class="track" aria-hidden="true">
              <svg class="cue" width="10" height="6" viewBox="0 0 10 6"><path fill="#8a8a8a" d="M0 6l5-6 5 6z"/></svg>
              <div class="thumb"></div>
              <svg class="cue" width="10" height="6" viewBox="0 0 10 6"><path fill="#505050" d="M0 0l5 6 5-6z"/></svg>
            </div>
          </div>
          <footer>© 2019 Jiyl's blog</footer>
        </div>
      </div>`;
  }
}
